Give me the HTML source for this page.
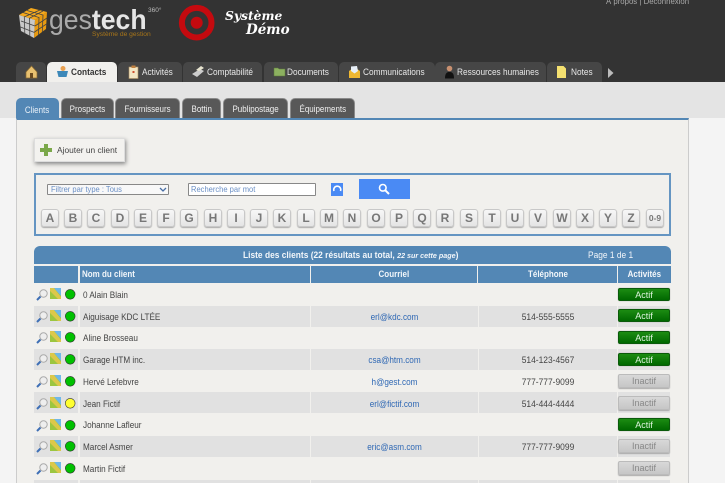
<!DOCTYPE html>
<html lang="fr"><head><meta charset="utf-8"><title>Gestech</title>
<style>
*{box-sizing:border-box}
html,body{margin:0;padding:0}
body{width:725px;height:483px;overflow:hidden;position:relative;background:#f4f4f4;font-family:"Liberation Sans",sans-serif;font-size:9.4px;color:#444}
#w{position:absolute;left:0;top:0;width:725px;height:483px;overflow:hidden;filter:blur(.3px)}
.a{position:absolute}
#hd{left:0;top:0;width:725px;height:82px;background:#333}
#band{left:0;top:82px;width:725px;height:36px;background:#e4e4e4}
#panel{left:16px;top:118px;width:673px;height:365px;background:#f1f0ed;border-top:2px solid #5387b5;border-left:1px solid #ccc;border-right:1px solid #ccc}
.t{position:absolute;top:62px;height:20px;background:#464646;color:#e8e8e8;border-radius:5px 5px 0 0;line-height:21px;font-size:9.3px;white-space:nowrap}
.t span{position:absolute;top:0;transform:scaleX(.89);transform-origin:0 0}
.t svg{position:absolute;top:3px}
.t.on{background:#f1f0ed;color:#333;font-weight:bold;top:62px}
.s{position:absolute;top:98px;height:20px;background:#585858;color:#f0f0f0;border-radius:5px 5px 0 0;line-height:20px;text-align:center;font-size:9.2px;border:1px solid #8a8a8a;border-bottom:0;white-space:nowrap}
.s span{display:inline-block;transform:scaleX(.87)}
.s.on{background:#5387b5;color:#e8f0f8;border-color:#5387b5;line-height:22px}
#add{left:34px;top:138px;width:91px;height:24px;background:#f3f2ef;border:1px solid #ddd;box-shadow:1px 2px 4px #888;line-height:23px;padding-left:22px;font-size:8.4px;color:#444;white-space:nowrap}
#box{left:34px;top:173px;width:637px;height:63px;border:2px solid #6595c2}
#sel{left:47px;top:184px;width:122px;height:11px;border:1px solid #888;background:#f8f8f8;color:#6a8fc5;font-size:8.6px;line-height:9px;padding-left:3px;border-radius:1px}
#inp{left:188px;top:183px;width:128px;height:13px;border:1px solid #888;background:#fff;color:#6a8fc5;font-size:8.6px;line-height:11px;padding-left:2px;border-radius:1px}
#sel span,#inp span{display:inline-block;transform:scaleX(.88);transform-origin:0 0;white-space:nowrap}
#ref{left:331px;top:183px;width:12px;height:13px;background:#4a8af4}
#go{left:359px;top:179px;width:51px;height:20px;background:#4a8af4}
.l{position:absolute;top:209px;width:18px;height:18px;background:linear-gradient(#f7f7f7,#e4e4e4);border:1px solid #c8c8c8;border-radius:3px;box-shadow:0 1px 1px #aaa;color:#777;font-weight:bold;font-size:12px;line-height:17px;text-align:center}
#cap{left:34px;top:246px;width:637px;height:18px;background:#5387b5;border-radius:6px 6px 0 0;color:#f2f6fa;font-weight:bold;font-size:8.8px;line-height:18px}
.h{position:absolute;top:266px;height:17px;background:#5387b5;color:#f2f6fa;font-weight:bold;font-size:8.8px;line-height:17px;text-align:center}
.h span{display:inline-block;transform:scaleX(.91);transform-origin:50% 0}
.g{position:absolute;height:21px;background:#e1e1e1}
.n{position:absolute;left:83px;color:#444;line-height:12px;white-space:nowrap;transform:scaleX(.87);transform-origin:0 0}
.m{position:absolute;left:311px;width:167px;text-align:center;color:#2f68b4;line-height:12px;transform:scaleX(.87)}
.p{position:absolute;left:479px;width:138px;text-align:center;color:#444;line-height:12px;transform:scaleX(.9)}
.on1{position:absolute;left:618px;width:52px;height:13px;background:linear-gradient(#1c8c12,#006800);border:1px solid #0a5a0a;border-radius:2px;color:#dff5df;text-align:center;line-height:12px;font-size:9px;box-shadow:0 0 1px #999}
.off{position:absolute;left:618px;width:52px;height:14px;background:linear-gradient(#d8d8d8,#c6c6c6);border:1px solid #bbb;border-radius:2px;color:#888;text-align:center;line-height:12px;font-size:9px;box-shadow:0 1px 1px #aaa}
.ic{position:absolute;left:36px;width:42px;height:13px;overflow:visible}
</style></head><body><div id="w">
<div class="a" id="hd"></div><div class="a" id="band"></div><div class="a" id="panel"></div>

<!-- logo -->
<svg class="a" style="left:18px;top:7px" width="32" height="32" viewBox="0 0 32 32">
<path d="M1 8L13 1L29 5L17 13Z" fill="#f5a81c"/>
<path d="M1 8L17 13L16 31L3 24Z" fill="#c9c9c9"/>
<path d="M17 13L29 5L28 22L16 31Z" fill="#e89a10"/>
<path d="M6 10L22 3M11 11.500L25 4M5 5.500L21 10.500M9 3.500L25 8M6.300 9.500L6.800 27M11.600 11.200L11.800 29M3 14L17 19M2.500 20L16.500 25.500M21 10.500L20.500 28M25 8L24.300 25M17 19L29 11M16.500 25L28.500 17" stroke="#444" stroke-width=".8" fill="none"/>
</svg>
<div class="a" style="left:49px;top:4px;font-size:28px;line-height:32px;color:#aaa;white-space:nowrap;transform:scaleX(.95);transform-origin:0 0">ges<b style="color:#e6e6e6">tech</b></div>
<div class="a" style="left:148px;top:7px;font-size:6.5px;color:#bbb;line-height:8px">360°</div>
<div class="a" style="left:92px;top:30px;font-size:6.700px;color:#a8761a;line-height:9px;white-space:nowrap">Système de gestion</div>
<svg class="a" style="left:178px;top:4px" width="38" height="38" viewBox="0 0 38 38"><circle cx="18.700" cy="18.700" r="14.800" fill="none" stroke="#c40a0f" stroke-width="6"/><circle cx="18.700" cy="18.700" r="6" fill="#c40a0f"/></svg>
<div class="a" style="left:225px;top:8px;font:italic bold 12.300px/15px 'DejaVu Serif',serif;color:#fff;white-space:nowrap">Système</div>
<div class="a" style="left:246px;top:22px;font:italic bold 13.500px/16px 'DejaVu Serif',serif;color:#fff;white-space:nowrap">Démo</div>
<div class="a" style="left:606px;top:-3px;font-size:7.8px;line-height:9px;color:#a8a8a8;white-space:nowrap">À propos | Déconnexion</div>

<!-- main tabs -->
<div class="t" style="left:16px;width:30px"><svg style="left:9px" width="13" height="14" viewBox="0 0 13 14"><path d="M6.500 1L12 7V13H1V7Z" fill="#e8c070" stroke="#8a6a30" stroke-width=".7"/><path d="M5 13V8H8V13Z" fill="#6a4a20"/></svg></div>
<div class="t on" style="left:47px;width:70px"><svg style="left:9px" width="13" height="13" viewBox="0 0 13 13"><path d="M1 6H12L10.500 12H2.500Z" fill="#3d88b8"/><circle cx="7" cy="3.500" r="2.500" fill="#e8a050"/></svg><span style="left:24px">Contacts</span></div>
<div class="t" style="left:118px;width:64px"><svg style="left:10px" width="11" height="14" viewBox="0 0 11 14"><rect x="1" y="2" width="9" height="11.500" fill="#f3e6c4" stroke="#b09060" stroke-width=".6"/><rect x="3.500" y="0.500" width="4" height="2.500" fill="#c08040"/><rect x="4.500" y="6" width="2" height="2" fill="#d05030"/></svg><span style="left:24px">Activités</span></div>
<div class="t" style="left:183px;width:79px"><svg style="left:8px" width="14" height="13" viewBox="0 0 14 13"><path d="M1 9L9 4L13 6L6 12Z" fill="#ccc"/><path d="M5 5L10 1L13 3L8 6Z" fill="#e8e4d0"/></svg><span style="left:24px">Comptabilité</span></div>
<div class="t" style="left:264px;width:74px"><svg style="left:9px" width="13" height="12" viewBox="0 0 13 12"><path d="M1 3H5L6 4H12V11H1Z" fill="#8cb060" stroke="#5a7a38" stroke-width=".5"/></svg><span style="left:23px">Documents</span></div>
<div class="t" style="left:339px;width:96px"><svg style="left:9px" width="13" height="14" viewBox="0 0 13 14"><path d="M1 6L6.500 2L12 6V13H1Z" fill="#f0b830"/><path d="M3 6V1.500L9 1L10 6L6.500 8.500Z" fill="#e8f0f8"/></svg><span style="left:24px">Communications</span></div>
<div class="t" style="left:435px;width:111px"><svg style="left:9px" width="11" height="14" viewBox="0 0 11 14"><circle cx="5.500" cy="3.500" r="2.800" fill="#c89070"/><path d="M1 13.500C1 8 3 7 5.500 7S10 8 10 13.500Z" fill="#111"/></svg><span style="left:22px">Ressources humaines</span></div>
<div class="t" style="left:547px;width:55px"><svg style="left:9px" width="11" height="14" viewBox="0 0 11 14"><path d="M1 1H7.500L10 3.500V13H1Z" fill="#f4e070"/></svg><span style="left:24px">Notes</span></div>
<svg class="a" style="left:608px;top:68px" width="6" height="10" viewBox="0 0 6 10"><path d="M0 0L5.500 5L0 10Z" fill="#bbb"/></svg>

<!-- sub tabs -->
<div class="s on" style="left:16px;width:43px"><span>Clients</span></div>
<div class="s" style="left:61px;width:53px"><span>Prospects</span></div>
<div class="s" style="left:115px;width:65px"><span>Fournisseurs</span></div>
<div class="s" style="left:182px;width:39px"><span>Bottin</span></div>
<div class="s" style="left:223px;width:65px"><span>Publipostage</span></div>
<div class="s" style="left:290px;width:65px"><span>Équipements</span></div>

<!-- add -->
<div class="a" id="add">Ajouter un client</div>
<svg class="a" style="left:40px;top:144px" width="12" height="12" viewBox="0 0 12 12"><path d="M4 0H8V4H12V8H8V12H4V8H0V4H4Z" fill="#7ba84a"/></svg>

<!-- search -->
<div class="a" id="box"></div>
<div class="a" id="sel"><span>Filtrer par type : Tous</span></div>
<svg class="a" style="left:159px;top:187px" width="8" height="5" viewBox="0 0 8 5"><path d="M1 1L4 4L7 1" stroke="#4a6fa5" stroke-width="1.300" fill="none"/></svg>
<div class="a" id="inp"><span>Recherche par mot</span></div>
<div class="a" id="ref"><svg width="12" height="13" viewBox="0 0 12 13"><path d="M3 8A3.500 3.500 0 1 1 9.500 8" stroke="#fff" stroke-width="1.600" fill="none"/></svg></div>
<div class="a" id="go"><svg style="position:absolute;left:19px;top:4px" width="12" height="12" viewBox="0 0 12 12"><circle cx="4.800" cy="4.800" r="3.300" stroke="#fff" stroke-width="1.600" fill="none"/><path d="M7.300 7.300L11 11" stroke="#fff" stroke-width="2"/></svg></div>

<div class="l" style="left:41px">A</div><div class="l" style="left:64px">B</div><div class="l" style="left:87px">C</div><div class="l" style="left:111px">D</div><div class="l" style="left:134px">E</div><div class="l" style="left:157px">F</div><div class="l" style="left:180px">G</div><div class="l" style="left:204px">H</div><div class="l" style="left:227px">I</div><div class="l" style="left:250px">J</div><div class="l" style="left:273px">K</div><div class="l" style="left:297px">L</div><div class="l" style="left:320px">M</div><div class="l" style="left:343px">N</div><div class="l" style="left:367px">O</div><div class="l" style="left:390px">P</div><div class="l" style="left:413px">Q</div><div class="l" style="left:436px">R</div><div class="l" style="left:460px">S</div><div class="l" style="left:483px">T</div><div class="l" style="left:506px">U</div><div class="l" style="left:529px">V</div><div class="l" style="left:553px">W</div><div class="l" style="left:576px">X</div><div class="l" style="left:599px">Y</div><div class="l" style="left:622px">Z</div><div class="l" style="left:646px;font-size:8.500px">0-9</div>

<!-- table -->
<div class="a" id="cap"><span class="a" style="left:209px;white-space:nowrap;transform:scaleX(.955);transform-origin:0 0">Liste des clients (22 résultats au total, <i style="font-size:7.500px">22 sur cette page</i>)</span><span class="a" style="left:554px;top:1px;white-space:nowrap;font-weight:normal;font-size:9.500px;transform:scaleX(.88);transform-origin:0 0">Page 1 de 1</span></div>
<div class="h" style="left:34px;width:44px"></div>
<div class="h" style="left:80px;width:230px;text-align:left;padding-left:2px"><span style="transform-origin:0 0">Nom du client</span></div>
<div class="h" style="left:311px;width:166px"><span>Courriel</span></div>
<div class="h" style="left:478px;width:139px"><span>Téléphone</span></div>
<div class="h" style="left:618px;width:53px"><span>Activités</span></div>

<!-- grey row bands -->
<div class="g" style="left:34px;top:306px;width:44px"></div><div class="g" style="left:80px;top:306px;width:230px"></div><div class="g" style="left:311px;top:306px;width:167px"></div><div class="g" style="left:479px;top:306px;width:138px"></div><div class="g" style="left:618px;top:306px;width:52px"></div>
<div class="g" style="left:34px;top:349px;width:44px"></div><div class="g" style="left:80px;top:349px;width:230px"></div><div class="g" style="left:311px;top:349px;width:167px"></div><div class="g" style="left:479px;top:349px;width:138px"></div><div class="g" style="left:618px;top:349px;width:52px"></div>
<div class="g" style="left:34px;top:392px;width:44px"></div><div class="g" style="left:80px;top:392px;width:230px"></div><div class="g" style="left:311px;top:392px;width:167px"></div><div class="g" style="left:479px;top:392px;width:138px"></div><div class="g" style="left:618px;top:392px;width:52px"></div>
<div class="g" style="left:34px;top:436px;width:44px"></div><div class="g" style="left:80px;top:436px;width:230px"></div><div class="g" style="left:311px;top:436px;width:167px"></div><div class="g" style="left:479px;top:436px;width:138px"></div><div class="g" style="left:618px;top:436px;width:52px"></div>
<div class="g" style="left:34px;top:480px;width:44px;height:3px"></div><div class="g" style="left:80px;top:480px;width:230px;height:3px"></div><div class="g" style="left:311px;top:480px;width:167px;height:3px"></div><div class="g" style="left:479px;top:480px;width:138px;height:3px"></div><div class="g" style="left:618px;top:480px;width:52px;height:3px"></div>

<svg width="0" height="0" style="position:absolute"><defs>
<g id="i"><circle cx="7.500" cy="4.500" r="3.700" fill="#eee" stroke="#aaa" stroke-width="1"/><path d="M4.500 7.500L1 11" stroke="#3f6fb5" stroke-width="2"/>
<rect x="14" y="-1" width="11" height="11" fill="#9cc63f"/><path d="M18 -1H25V7Z" fill="#6fb8e8"/><path d="M14 -1L14 2L22 10H25V8L18 -1Z" fill="#dcc84a"/></g>
<g id="gr"><use href="#i"/><circle cx="34.200" cy="5.300" r="4.900" fill="#00c000" stroke="#333" stroke-width=".6"/></g>
<g id="ye"><use href="#i"/><circle cx="34.200" cy="5.300" r="4.900" fill="#ffff30" stroke="#333" stroke-width=".6"/></g>
</defs></svg>

<svg class="ic" style="top:289px" viewBox="0 0 42 13"><use href="#gr"/></svg><div class="n" style="top:289px">0 Alain Blain</div><div class="on1" style="top:288px">Actif</div>
<svg class="ic" style="top:311px" viewBox="0 0 42 13"><use href="#gr"/></svg><div class="n" style="top:311px">Aiguisage KDC LTÉE</div><div class="m" style="top:311px">erl@kdc.com</div><div class="p" style="top:311px">514-555-5555</div><div class="on1" style="top:309px">Actif</div>
<svg class="ic" style="top:332px" viewBox="0 0 42 13"><use href="#gr"/></svg><div class="n" style="top:332px">Aline Brosseau</div><div class="on1" style="top:331px">Actif</div>
<svg class="ic" style="top:354px" viewBox="0 0 42 13"><use href="#gr"/></svg><div class="n" style="top:354px">Garage HTM inc.</div><div class="m" style="top:354px">csa@htm.com</div><div class="p" style="top:354px">514-123-4567</div><div class="on1" style="top:353px">Actif</div>
<svg class="ic" style="top:376px" viewBox="0 0 42 13"><use href="#gr"/></svg><div class="n" style="top:376px">Hervé Lefebvre</div><div class="m" style="top:376px">h@gest.com</div><div class="p" style="top:376px">777-777-9099</div><div class="off" style="top:374px">Inactif</div>
<svg class="ic" style="top:398px" viewBox="0 0 42 13"><use href="#ye"/></svg><div class="n" style="top:398px">Jean Fictif</div><div class="m" style="top:398px">erl@fictif.com</div><div class="p" style="top:398px">514-444-4444</div><div class="off" style="top:396px">Inactif</div>
<svg class="ic" style="top:420px" viewBox="0 0 42 13"><use href="#gr"/></svg><div class="n" style="top:419px">Johanne Lafleur</div><div class="on1" style="top:418px">Actif</div>
<svg class="ic" style="top:441px" viewBox="0 0 42 13"><use href="#gr"/></svg><div class="n" style="top:441px">Marcel Asmer</div><div class="m" style="top:441px">eric@asm.com</div><div class="p" style="top:441px">777-777-9099</div><div class="off" style="top:439px">Inactif</div>
<svg class="ic" style="top:463px" viewBox="0 0 42 13"><use href="#gr"/></svg><div class="n" style="top:463px">Martin Fictif</div><div class="off" style="top:461px">Inactif</div>
</div></body></html>
